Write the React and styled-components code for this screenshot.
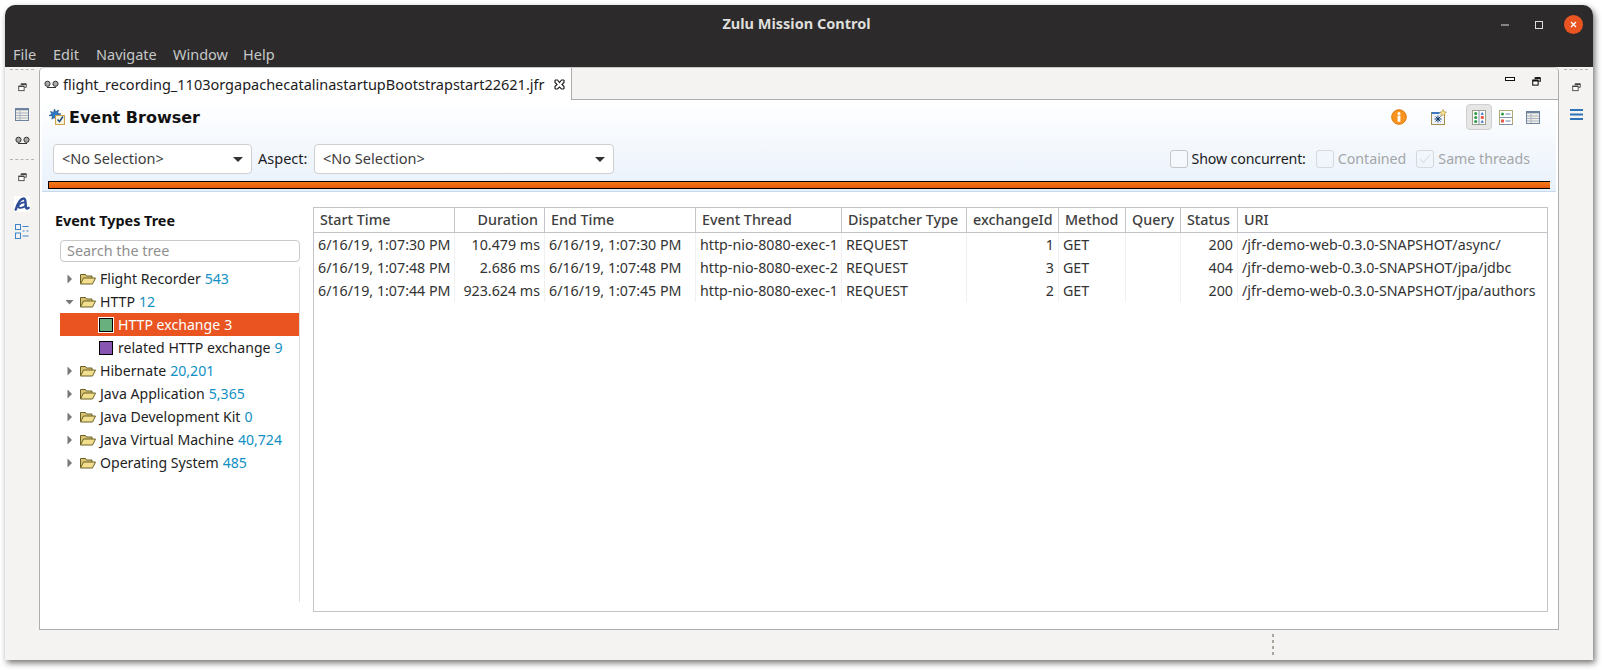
import React from 'react';
import styled, { createGlobalStyle } from 'styled-components';

const Global = createGlobalStyle`
  html, body { margin: 0; padding: 0; background: #fff; }
  #root { width: 1602px; height: 670px; overflow: hidden; }
  * { box-sizing: border-box; }
`;
const FONT = `"Noto Sans", "Open Sans", sans-serif`;

const Page = styled.div`
  width: 1602px; height: 670px; padding: 5px 9px 10px 5px; background: #fff;
  font-family: ${FONT}; font-size: 14px; color: #2c2c2c;
`;
const Win = styled.div`
  width: 1588px; height: 655px; display: flex; flex-direction: column;
  border-radius: 10px 10px 0 0; background: #f4f3f1;
  box-shadow: 2px 3px 6px rgba(0,0,0,.55);
`;
const Chrome = styled.div`
  background: #2c2a2a; border-radius: 10px 10px 0 0; height: 62px; flex: none; display: flex; flex-direction: column;
`;
const TitleBar = styled.div`
  height: 36px; flex: none; display: flex; align-items: center; position: relative; justify-content: center; padding-right: 5px;
  color: #dededb; font-weight: 700; font-size: 14.5px;
`;
const WinControls = styled.div`
  position: absolute; right: 3px; top: 10px; display: flex; align-items: center;
`;
const WinSlot = styled.div`
  width: 34px; height: 19px; display: flex; align-items: center; justify-content: center;
`;
const CloseDot = styled.div`
  width: 19px; height: 19px; border-radius: 50%; background: #e95420; display: flex; align-items: center; justify-content: center;
`;
const MenuBar = styled.div`
  display: flex; padding-left: 8px; height: 24px; margin-top: 1px; align-items: center; color: #c6c8c9; font-size: 14.5px;
`;
const MenuItem = styled.span`
  width: ${p => p.$w}px; flex: none;
`;
const Body = styled.div`
  height: 563px; flex: none; display: flex; min-height: 0;
`;
const Strip = styled.div`
  width: ${p => p.$w}px; flex: none; display: flex; flex-direction: column; align-items: center; padding-top: 2px;
`;
const Dashes = styled.div`
  width: 24px; height: 0; border-top: 1px dashed #b5b3ad; flex: none; margin-top: ${p => p.$mt || 0}px;
`;
const StripIcon = styled.div`
  height: ${p => p.$h}px; display: flex; align-items: center; justify-content: center; flex: none;
`;
const Panel = styled.div`
  width: 1520px; height: 563px; flex: none; border: 1px solid #aeaeae; border-top-color: #c8c8c8; border-radius: 5px 5px 0 0; background: #fff;
  display: flex; flex-direction: column;
`;
const TabBar = styled.div`
  height: 32px; flex: none; background: #f4f3f1; border-bottom: 1px solid #aeaeae; display: flex; border-radius: 5px 5px 0 0;
`;
const Tab = styled.div`
  width: 532px; height: 32px; flex: none; background: #fff; border-right: 1px solid #aeaeae; display: flex; align-items: center; padding: 0 0 0 4px;
  font-size: 14.5px; color: #1c1c1c; border-radius: 5px 0 0 0;
`;
const TabLabel = styled.span`
  margin-left: 4px; width: 491px; flex: none; white-space: nowrap;
`;
const TabTools = styled.div`
  flex: 1; display: flex; justify-content: flex-end; align-items: flex-start; gap: 17px; padding: 9px 17px 0 0;
`;
const Form = styled.div`
  height: 92px; flex: none; background: linear-gradient(#fff, #e9f1fb); padding: 0 8px 0 6px; display: flex; flex-direction: column;
  border-bottom: 1px solid #c7d9ee; margin: 0 2px;
`;
const FormHead = styled.div`
  height: 44px; flex: none; display: flex; align-items: center; padding: 0 0 10px 1px;
`;
const FormTitle = styled.h1`
  margin: 0 0 0 4px; font: 700 16px "DejaVu Sans", sans-serif; color: #111;
`;
const HeadTools = styled.div`
  margin-left: auto; display: flex; align-items: center; padding-right: 2px;
`;
const HeadTool = styled.div`
  width: ${p => p.$w}px; height: 26px; display: flex; align-items: center; justify-content: center; flex: none; border-radius: 4px;
  border: 1px solid ${p => p.$on ? '#cfcfcf' : 'transparent'}; background: ${p => p.$on ? '#e6e6e6' : 'transparent'};
`;
const Filters = styled.div`
  height: 30px; flex: none; display: flex; align-items: center; padding-left: 5px;
`;
const Combo = styled.div`
  width: ${p => p.$w}px; height: 30px; flex: none; background: #fff; border: 1px solid #cfcfcf; border-radius: 4px; display: flex; align-items: center; justify-content: space-between;
  padding: 0 8px 2px 8px; color: #3c3c3c; font-size: 14.5px;
`;
const Caret = styled.span`
  width: 0; height: 0; margin-top: 2px; border-left: 5px solid transparent; border-right: 5px solid transparent; border-top: 5px solid #333;
`;
const ComboLabel = styled.span`
  width: 62px; flex: none; padding: 0 0 2px 6px; color: #1c1c1c; font-size: 14.5px;
`;
const Checks = styled.div`
  margin-left: auto; display: flex; align-items: center; padding-right: 18px;
`;
const Box = styled.span`
  width: 18px; height: 18px; flex: none; border: 1px solid ${p => p.$off ? '#d6d8dc' : '#c4c6c8'}; border-radius: 3px; background: ${p => p.$off ? 'transparent' : '#f5f8fc'}; display: flex; align-items: center; justify-content: center;
`;
const CheckText = styled.span`
  margin: 0 ${p => p.$mr}px 2px 4px; color: ${p => p.$off ? '#a4a6a8' : '#1c1c1c'}; font-size: 14.2px; letter-spacing: ${p => p.$ls || 0}px; white-space: nowrap;
`;
const Progress = styled.div`
  height: 8px; flex: none; margin: 7px 0 3px 0; border: 1px solid #000; border-right: 0; background: linear-gradient(#f77a17, #e8590a); width: 1502px;
`;
const Content = styled.div`
  flex: 1; min-height: 0; display: flex; padding: 15px 10px 17px 15px;
`;
const TreePane = styled.div`
  width: 245px; flex: none; display: flex; flex-direction: column; margin-right: 13px;
`;
const TreeTitle = styled.h2`
  margin: 0; height: 33px; flex: none; font-size: 14.4px; font-weight: 700; color: #111; line-height: 28px;
`;
const SearchBox = styled.div`
  margin-left: 5px; height: 22px; flex: none; border: 1px solid #c9c9c9; border-radius: 4px; padding-left: 6px; color: #8f8f8f; line-height: 19px; font-size: 14.4px;
`;
const Tree = styled.div`
  margin: 5px 0 10px 5px; flex: 1; border-right: 1px solid #dcdcdc;
`;
const TreeRow = styled.div`
  height: 23px; display: flex; align-items: center; white-space: nowrap; font-size: 14.1px;
  padding-left: ${p => p.$leaf ? 39 : 5}px; background: ${p => p.$sel ? '#e95420' : 'transparent'}; color: ${p => p.$sel ? '#fff' : '#1e1e1e'};
`;
const Arrow = styled.span`
  width: 15px; flex: none; display: flex; align-items: center;
`;
const FolderGap = styled.span`
  width: 4px; flex: none;
`;
const Swatch = styled.span`
  width: 14px; height: 14px; flex: none; margin-right: 5px; border: 1px solid #000; background: ${p => p.$c};
  outline: ${p => p.$sel ? '1px solid #fff' : 'none'};
`;
const Count = styled.span`
  margin-left: 4px; color: ${p => p.$sel ? '#fff' : '#1190c4'};
`;
const Grid = styled.div`
  flex: 1; border: 1px solid #c3c4c9; display: flex; flex-direction: column; min-width: 0;
`;
const COLS = '141px 90px 151px 146px 125px 92px 67px 55px 57px 1fr';
const HeadRow = styled.div`
  display: grid; grid-template-columns: ${COLS}; height: 25px; flex: none; border-bottom: 1px solid #c3c4c9;
`;
const HeadCell = styled.div`
  border-right: 1px solid #c3c4c9; padding: 0 6px 0 6px; line-height: 23px; font-size: 14.3px; font-weight: 500; color: #3e3e3e; white-space: nowrap; text-align: ${p => p.$r ? 'right' : 'left'};
  &:last-child { border-right: 0; }
`;
const DataRow = styled.div`
  display: grid; grid-template-columns: ${COLS}; height: 23px; flex: none;
`;
const Cell = styled.div`
  border-right: 1px solid #f0f0f0; padding: 0 4px 0 4px; line-height: 23px; font-size: 14.25px; color: #333; white-space: nowrap; overflow: visible; text-align: ${p => p.$r ? 'right' : 'left'};
  &:last-child { border-right: 0; }
`;
const Foot = styled.div`
  flex: 1; display: flex; padding: 4px 0 0 1267px;
`;
const FootDots = styled.div`
  width: 2px; height: 23px; background: repeating-linear-gradient(#a8a69f 0 3px, transparent 3px 6px);
`;

const Tape = () => <svg width="15" height="9" viewBox="0 0 15 9"><circle cx="3.5" cy="3.8" r="2.6" fill="#aaa" stroke="#333" /><circle cx="11.5" cy="3.8" r="2.6" fill="#aaa" stroke="#333" /><path d="M3 7.5h9" stroke="#333" fill="none" /></svg>;
const Restore = () => <svg width="9" height="9" viewBox="0 0 10 10" fill="none" stroke="#444"><path d="M3.5 2.5V.8h5.7v4H7" /><rect x=".8" y="3.5" width="6" height="5" fill="#fff" /><path d="M.8 3.8h6M3.5 1.5h5.5" strokeWidth="1.4" /></svg>;
const RestoreDark = () => <svg width="9" height="9" viewBox="0 0 10 10" fill="none" stroke="#111" strokeWidth="1.2"><path d="M3.5 2.5V.8h5.7v4H7" /><rect x=".8" y="3.5" width="6" height="5.5" fill="#fff" /><path d="M.8 4h6M3.5 1.3h5.5" strokeWidth="1.8" /></svg>;
const MinBox = () => <svg width="10" height="4" viewBox="0 0 10 4"><rect x=".5" y=".5" width="9" height="3" fill="#fff" stroke="#111" /></svg>;
const TableIco = ({ c = '#6d83a0' }) => <svg width="14" height="13" viewBox="0 0 14 13"><rect x=".5" y=".5" width="13" height="12" fill="#f3f0e6" stroke={c} /><path d="M.5 1.5h13" stroke={c} strokeWidth="1.6" /><path d="M1 5h12M1 7.5h12M1 10h12M5 3v9" stroke="#a7b3c4" fill="none" /></svg>;
const Folder = () => <svg width="16" height="12" viewBox="0 0 16 12"><path d="M.5 11V1.5h5l1 1.5h5.5v2" fill="#d9c476" stroke="#6b6024" /><path d="M.5 11l3-6h12l-3 6z" fill="#f1df8f" stroke="#6b6024" strokeLinejoin="round" /></svg>;
const TreeArrow = ({ open }) => open
  ? <svg width="10" height="10" viewBox="0 0 10 10"><path d="M.5 3h8l-4 4.5z" fill="#777" /></svg>
  : <svg width="10" height="10" viewBox="0 0 10 10"><path d="M2.5.5l4.5 4.5-4.5 4.5z" fill="#777" /></svg>;
const EventIco = () => <svg width="16" height="16" viewBox="0 0 16 16"><path d="M5.500 0l1.200 2.800L9.500 1 8.700 4.500l3.300.3-2.700 2 1.600 2.600-3-.9-1 3-1.300-2.900-2.900 1.500.8-3.100L0 6.500l2.800-1.400L1.500 2.400l3 1z" fill="#2a78c8" stroke="#123a6a" strokeWidth=".5" /><rect x="6.500" y="6.500" width="9" height="9" fill="#f7f3da" stroke="#c9a24a" /><path d="M8.500 10.500l2 2 3.500-5" fill="none" stroke="#1c4f8c" strokeWidth="1.500" /></svg>;
const Info = () => <svg width="16" height="16" viewBox="0 0 16 16"><circle cx="8" cy="8" r="7.3" fill="#f7931e" stroke="#e07b0a" /><circle cx="8" cy="4.4" r="1.5" fill="#fff" /><rect x="6.6" y="6.6" width="2.8" height="6.2" fill="#fff" /></svg>;
const NewPage = () => <svg width="16" height="16" viewBox="0 0 16 16"><rect x=".5" y="3.5" width="13" height="12" fill="#eef3fa" stroke="#a68f4e" /><path d="M.5 4h8" stroke="#3d78c0" strokeWidth="2" /><path d="M7 6.500v7M3.500 10h7M4.500 7.500l5 5M9.500 7.500l-5 5" stroke="#123a6a" fill="none" /><path d="M12 .5l1 2.200 2.400.5-1.800 1.400.4 2.400-2-1.300-2 1.300.4-2.400L9 3.200l2.200-.5z" fill="#f8e6a0" stroke="#b5922e" strokeWidth=".7" /></svg>;
const ColsIco = () => <svg width="14" height="15" viewBox="0 0 14 15"><rect x=".5" y=".5" width="13" height="14" fill="#fff" stroke="#9aa08a" /><path d="M7 .5v14" stroke="#8090a8" /><g fill="#2c9a48"><circle cx="3.700" cy="3.500" r="1.600" /><circle cx="3.700" cy="7.500" r="1.600" /><circle cx="3.700" cy="11.500" r="1.600" /></g><path d="M10.200 2l1.700 2.800H8.500z" fill="#3a6ec0" /><rect x="8.800" y="6" width="3" height="3" fill="#e85c50" /><path d="M10.200 10l1.700 2.800H8.500z" fill="#3a6ec0" /></svg>;
const RowsIco = () => <svg width="14" height="15" viewBox="0 0 14 15"><rect x=".5" y=".5" width="13" height="14" fill="#fff" stroke="#b3a876" /><path d="M.5 7.500h13" stroke="#7d92ad" /><path d="M.5 14.500h13" stroke="#7d92ad" /><circle cx="3.500" cy="4" r="1.500" fill="#2c9a48" /><rect x="2" y="9.500" width="3" height="3" fill="#e85c50" /><path d="M6.500 4h5M6.500 11h5" stroke="#6b86ab" /></svg>;
const AIco = () => <svg width="16" height="16" viewBox="0 0 16 16"><rect width="16" height="16" fill="#fff" /><path d="M1.800 13.500C3.500 8 6.500 2.500 9.800 2.500c2.200 0 1.700 5 2 8.500.2 2 1.600 1.800 2.700.8" fill="none" stroke="#2f4d96" strokeWidth="2.500" strokeLinecap="round" /><path d="M12 6.500C8 6 4.500 8 4.500 10.500c0 2 3.500 2 7-.5" fill="none" stroke="#2f4d96" strokeWidth="1.800" /></svg>;
const OutlineIco = () => <svg width="14" height="15" viewBox="0 0 14 15" fill="none" stroke="#3f83c9"><rect x=".5" y=".5" width="5" height="5" /><rect x=".5" y="9" width="5" height="5.500" /><path d="M7.500 2.500h6M7.500 7h2M11.500 7h2M7.500 12h6" /></svg>;
const LinesIco = () => <svg width="13" height="11" viewBox="0 0 13 11"><path d="M0 1h13M0 5.500h13M0 10h13" stroke="#2f72b8" strokeWidth="2" /></svg>;
const CloseX = () => <svg width="11" height="11" viewBox="0 0 11 11"><path d="M1.500 1h2L5.500 3.500 7.500 1h2l.5 .5v2L8 5.500 10 7.500v2l-.5 .5h-2L5.500 8 3.500 10h-2L1 9.500v-2L3 5.500 1 3.500v-2z" fill="#fff" stroke="#222" strokeWidth="1.200" /></svg>;
const Check = () => <svg width="12" height="10" viewBox="0 0 12 10"><path d="M1 5l3.500 3.500L11 1" fill="none" stroke="#dfe3e8" strokeWidth="1.300" /></svg>;

const tree = [
  { n: 'Flight Recorder', c: '543' },
  { n: 'HTTP', c: '12', open: true },
  { n: 'HTTP exchange', c: '3', leaf: '#69b07f', sel: true },
  { n: 'related HTTP exchange', c: '9', leaf: '#8855b0' },
  { n: 'Hibernate', c: '20,201' },
  { n: 'Java Application', c: '5,365' },
  { n: 'Java Development Kit', c: '0' },
  { n: 'Java Virtual Machine', c: '40,724' },
  { n: 'Operating System', c: '485' },
];
const heads = [['Start Time'], ['Duration', 1], ['End Time'], ['Event Thread'], ['Dispatcher Type'], ['exchangeId', 1], ['Method'], ['Query'], ['Status'], ['URI']];
const rows = [
  ['6/16/19, 1:07:30 PM', '10.479 ms', '6/16/19, 1:07:30 PM', 'http-nio-8080-exec-1', 'REQUEST', '1', 'GET', '', '200', '/jfr-demo-web-0.3.0-SNAPSHOT/async/'],
  ['6/16/19, 1:07:48 PM', '2.686 ms', '6/16/19, 1:07:48 PM', 'http-nio-8080-exec-2', 'REQUEST', '3', 'GET', '', '404', '/jfr-demo-web-0.3.0-SNAPSHOT/jpa/jdbc'],
  ['6/16/19, 1:07:44 PM', '923.624 ms', '6/16/19, 1:07:45 PM', 'http-nio-8080-exec-1', 'REQUEST', '2', 'GET', '', '200', '/jfr-demo-web-0.3.0-SNAPSHOT/jpa/authors'],
];
const rightCols = [1, 5, 8];

export default function App() {
  return (
    <Page>
      <Global />
      <Win>
        <Chrome>
          <TitleBar>
            Zulu Mission Control
            <WinControls>
              <WinSlot><svg width="8" height="2" viewBox="0 0 8 2"><path d="M0 1h8" stroke="#ddd" strokeWidth="1" /></svg></WinSlot>
              <WinSlot><svg width="8" height="8" viewBox="0 0 8 8"><rect x=".5" y=".5" width="7" height="7" fill="none" stroke="#ddd" /></svg></WinSlot>
              <WinSlot><CloseDot><svg width="9" height="9" viewBox="0 0 9 9"><path d="M2 2l5 5M7 2L2 7" stroke="#fff" strokeWidth="1.300" /></svg></CloseDot></WinSlot>
            </WinControls>
          </TitleBar>
          <MenuBar>
            <MenuItem $w={40}>File</MenuItem>
            <MenuItem $w={43}>Edit</MenuItem>
            <MenuItem $w={77}>Navigate</MenuItem>
            <MenuItem $w={70}>Window</MenuItem>
            <MenuItem $w={40}>Help</MenuItem>
          </MenuBar>
        </Chrome>
        <Body>
          <Strip $w={34}>
            <Dashes />
            <StripIcon $h={34}><Restore /></StripIcon>
            <StripIcon $h={20}><TableIco /></StripIcon>
            <StripIcon $h={32}><Tape /></StripIcon>
            <Dashes $mt={3} />
            <StripIcon $h={34}><Restore /></StripIcon>
            <StripIcon $h={20}><AIco /></StripIcon>
            <StripIcon $h={35}><OutlineIco /></StripIcon>
          </Strip>
          <Panel>
            <TabBar>
              <Tab>
                <Tape />
                <TabLabel>flight_recording_1103orgapachecatalinastartupBootstrapstart22621.jfr</TabLabel>
                <CloseX />
              </Tab>
              <TabTools>
                <MinBox />
                <RestoreDark />
              </TabTools>
            </TabBar>
            <Form>
              <FormHead>
                <EventIco />
                <FormTitle>Event Browser</FormTitle>
                <HeadTools>
                  <HeadTool $w={54}><Info /></HeadTool>
                  <HeadTool $w={26}><NewPage /></HeadTool>
                  <HeadTool $w={14} />
                  <HeadTool $w={26} $on><ColsIco /></HeadTool>
                  <HeadTool $w={27}><RowsIco /></HeadTool>
                  <HeadTool $w={27}><TableIco /></HeadTool>
                </HeadTools>
              </FormHead>
              <Filters>
                <Combo $w={199}>&lt;No Selection&gt;<Caret /></Combo>
                <ComboLabel>Aspect:</ComboLabel>
                <Combo $w={300}>&lt;No Selection&gt;<Caret /></Combo>
                <Checks>
                  <Box />
                  <CheckText $mr={10} $ls={-.15}>Show concurrent:</CheckText>
                  <Box $off />
                  <CheckText $off $mr={10}>Contained</CheckText>
                  <Box $off><Check /></Box>
                  <CheckText $off $mr={0}>Same threads</CheckText>
                </Checks>
              </Filters>
              <Progress />
            </Form>
            <Content>
              <TreePane>
                <TreeTitle>Event Types Tree</TreeTitle>
                <SearchBox>Search the tree</SearchBox>
                <Tree>
                  {tree.map(t => (
                    <TreeRow key={t.n} $leaf={!!t.leaf} $sel={t.sel}>
                      {t.leaf ? <Swatch $c={t.leaf} $sel={t.sel} /> : <><Arrow><TreeArrow open={t.open} /></Arrow><Folder /><FolderGap /></>}
                      {t.n}<Count $sel={t.sel}>{t.c}</Count>
                    </TreeRow>
                  ))}
                </Tree>
              </TreePane>
              <Grid>
                <HeadRow>
                  {heads.map(([h, r]) => <HeadCell key={h} $r={r}>{h}</HeadCell>)}
                </HeadRow>
                {rows.map((r, i) => (
                  <DataRow key={i}>
                    {r.map((c, j) => <Cell key={j} $r={rightCols.includes(j)}>{c}</Cell>)}
                  </DataRow>
                ))}
              </Grid>
            </Content>
          </Panel>
          <Strip $w={34}>
            <Dashes />
            <StripIcon $h={34}><Restore /></StripIcon>
            <StripIcon $h={20}><LinesIco /></StripIcon>
          </Strip>
        </Body>
        <Foot><FootDots /></Foot>
      </Win>
    </Page>
  );
}
